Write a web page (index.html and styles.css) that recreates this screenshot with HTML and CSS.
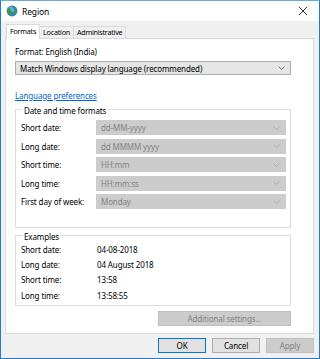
FILE: index.html
```html
<!DOCTYPE html>
<html>
<head>
<meta charset="utf-8">
<link rel="stylesheet" href="styles.css">
</head>
<body>
<div class="window">
  <div class="titlebar">
    <svg class="appicon" width="12" height="12" viewBox="0 0 12 12">
      <circle cx="6" cy="6" r="5.4" fill="#2f7fcf"/>
      <circle cx="5" cy="4.6" r="3.2" fill="#5fa6e8"/>
      <path d="M2.2 3 C3.6 2.6 4.8 3.4 4.4 4.6 C4 5.6 5 6.4 5.8 6.6 C6.8 6.9 6.4 8.6 5.2 10.2 C3.2 9.8 1.4 8 1 6 C0.8 4.8 1.4 3.8 2.2 3 Z" fill="#3e9b32"/>
      <path d="M6.6 1 C8.4 1.1 9.8 2.2 10.6 3.6 C9.4 4.2 8.2 3.6 7.6 2.8 C7.2 2.2 6.8 1.6 6.6 1 Z" fill="#3e9b32"/>
      <path d="M8.6 6 C9.6 5.8 10.6 6.2 10.8 6.8 C10.4 8.2 9.6 9.2 8.6 9.8 C8.2 8.6 8 7 8.6 6 Z" fill="#3e9b32"/>
    </svg>
    <span class="title">Region</span>
    <svg class="close" width="10" height="10" viewBox="0 0 10 10">
      <path d="M1 1 L9 9 M9 1 L1 9" stroke="#333" stroke-width="1"/>
    </svg>
  </div>
  <div class="content">
    <div class="tabs">
      <div class="tab active">Formats</div>
      <div class="tab">Location</div>
      <div class="tab">Administrative</div>
    </div>
    <div class="panel">
      <div class="format-label">Format: English (India)</div>
      <div class="select main-select">
        <span>Match Windows display language (recommended)</span>
        <svg class="chev" width="7" height="4" viewBox="0 0 7 4"><path d="M0.5 0.5 L3.5 3.5 L6.5 0.5" fill="none" stroke="#606060" stroke-width="0.8"/></svg>
      </div>
      <a class="link">Language preferences</a>
      <fieldset class="group formats">
        <legend>Date and time formats</legend>
        <div class="row"><span class="lbl">Short date:</span><div class="select dis"><span>dd-MM-yyyy</span><svg class="chev" width="7" height="4" viewBox="0 0 7 4"><path d="M0.5 0.5 L3.5 3.5 L6.5 0.5" fill="none" stroke="#a8a8a8" stroke-width="0.8"/></svg></div></div>
        <div class="row"><span class="lbl">Long date:</span><div class="select dis"><span>dd MMMM yyyy</span><svg class="chev" width="7" height="4" viewBox="0 0 7 4"><path d="M0.5 0.5 L3.5 3.5 L6.5 0.5" fill="none" stroke="#a8a8a8" stroke-width="0.8"/></svg></div></div>
        <div class="row"><span class="lbl">Short time:</span><div class="select dis"><span>HH:mm</span><svg class="chev" width="7" height="4" viewBox="0 0 7 4"><path d="M0.5 0.5 L3.5 3.5 L6.5 0.5" fill="none" stroke="#a8a8a8" stroke-width="0.8"/></svg></div></div>
        <div class="row"><span class="lbl">Long time:</span><div class="select dis"><span>HH:mm:ss</span><svg class="chev" width="7" height="4" viewBox="0 0 7 4"><path d="M0.5 0.5 L3.5 3.5 L6.5 0.5" fill="none" stroke="#a8a8a8" stroke-width="0.8"/></svg></div></div>
        <div class="row"><span class="lbl">First day of week:</span><div class="select dis"><span>Monday</span><svg class="chev" width="7" height="4" viewBox="0 0 7 4"><path d="M0.5 0.5 L3.5 3.5 L6.5 0.5" fill="none" stroke="#a8a8a8" stroke-width="0.8"/></svg></div></div>
      </fieldset>
      <fieldset class="group examples">
        <legend>Examples</legend>
        <div class="ex"><span class="lbl">Short date:</span><span>04-08-2018</span></div>
        <div class="ex"><span class="lbl">Long date:</span><span>04 August 2018</span></div>
        <div class="ex"><span class="lbl">Short time:</span><span>13:58</span></div>
        <div class="ex"><span class="lbl">Long time:</span><span>13:58:55</span></div>
      </fieldset>
      <div class="addrow"><div class="btn disabled additional">Additional settings...</div></div>
    </div>
    <div class="buttons">
      <div class="btn default">OK</div>
      <div class="btn">Cancel</div>
      <div class="btn disabled">Apply</div>
    </div>
  </div>
</div>
</body>
</html>
```
FILE: styles.css
```css
* { box-sizing: border-box; }
html, body { margin: 0; padding: 0; }
body {
  font-family: "Noto Sans", "DejaVu Sans", sans-serif;
  font-size: 8px;
  letter-spacing: -0.12px;
  color: #000;
  background: #fff;
}
.window {
  width: 320px;
  height: 359px;
  border: 1px solid #1e7bd2;
  border-top: 1px solid #6aa8e2;
  background: #f0f0f0;
  display: flex;
  flex-direction: column;
}
.titlebar {
  height: 20px;
  background: #fff;
  display: flex;
  align-items: center;
  padding: 0 0 0 5px;
}
.appicon { margin-right: 4px; }
.title { font-size: 8.5px; flex: 1; }
.close { margin-right: 11px; }
.content {
  flex: 1;
  display: flex;
  flex-direction: column;
  padding: 3px 5px 0 4px;
}
.tabs {
  display: flex;
  height: 14px;
  align-items: flex-end;
  padding-left: 1px;
}
.tab {
  height: 12px;
  line-height: 11px;
  padding: 0 3px;
  font-size: 7.2px;
  letter-spacing: -0.25px;
  border: 1px solid #d9d9d9;
  border-bottom: none;
  border-left: none;
  background: #f0f0f0;
}
.tab.active {
  height: 15px;
  background: #fff;
  border-left: 1px solid #d9d9d9;
  margin-bottom: -1px;
  position: relative;
  z-index: 1;
  line-height: 13px;
}
.panel {
  height: 296px;
  background: #fff;
  border: 1px solid #d9d9d9;
  padding: 6px 22px 0 9px;
  display: flex;
  flex-direction: column;
}
.format-label { height: 12px; line-height: 12px; margin-top: 1px; }
.select {
  height: 14px;
  display: flex;
  align-items: center;
  justify-content: space-between;
  padding: 0 5px 0 4px;
  border: 1px solid #adadad;
  background: #e5e5e5;
}
.main-select { margin-top: 3px; }
.select.dis {
  height: 15px;
  background: #cccccc;
  border-color: #cccccc;
  color: #838383;
  flex: 1;
}
.link {
  color: #0066cc;
  text-decoration: underline;
  margin-top: 15px;
  height: 11px;
  line-height: 11px;
  align-self: flex-start;
}
.group {
  border: 1px solid #dcdcdc;
  margin: 0;
  padding: 0 4px 0 5px;
  min-width: 0;
}
.group legend {
  padding: 4px 2px 0 2px;
  margin-left: 1px;
  line-height: 10px;
}
.formats { margin-top: 1px; height: 126px; padding-top: 4px; }
.row {
  display: flex;
  align-items: center;
  height: 15px;
  margin-bottom: 3.5px;
}
.row .lbl { width: 75px; }
.examples { margin-top: 0; height: 78px; padding-top: 0; }
.ex { display: flex; height: 15.2px; align-items: center; }
.ex .lbl { width: 76px; }
.addrow { display: flex; justify-content: flex-end; margin-top: 5px; }
.btn {
  height: 15px;
  border: 1px solid #adadad;
  background: #e1e1e1;
  display: flex;
  align-items: center;
  justify-content: center;
}
.btn.disabled {
  background: #cccccc;
  border-color: #bfbfbf;
  color: #838383;
}
.additional { width: 133px; }
.buttons {
  display: flex;
  justify-content: flex-end;
  gap: 6px;
  margin-top: 4px;
}
.buttons .btn { width: 48px; }
.btn.default { border-color: #0078d7; }
```
